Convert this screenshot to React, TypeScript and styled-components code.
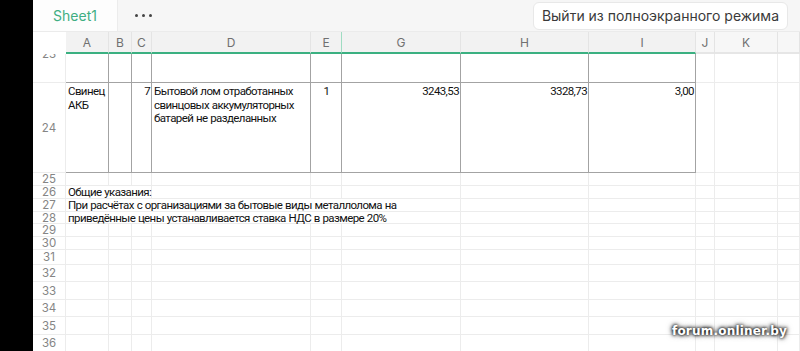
import React from 'react'
import styled, { createGlobalStyle } from 'styled-components'

const GlobalStyle = createGlobalStyle`
  html, body {
    margin: 0;
    padding: 0;
    background: #000;
  }
  body {
    font-family: Roboto, Inter, "Liberation Sans", sans-serif;
  }
`

// column widths: row head, A, B, C, D, E, G, H, I, J, K, rest
const COLS = [33, 43, 23, 20, 159, 31, 119, 128, 107, 19, 63, 22]
const LETTERS = ['A', 'B', 'C', 'D', 'E', 'G', 'H', 'I', 'J', 'K', '']
const SELECTED = 8 // A..I are underlined in green

const Screen = styled.div`
  width: 800px;
  height: 351px;
  display: flex;
  overflow: hidden;
  position: relative;
`

const SideBar = styled.div`
  width: 33px;
  flex: none;
  background: #000;
`

const Main = styled.div`
  flex: 1;
  display: flex;
  flex-direction: column;
  background: #fff;
  min-width: 0;
`

const TabBar = styled.div`
  height: 32px;
  flex: none;
  display: flex;
  align-items: center;
  background: #f6f6f6;
  border-bottom: 1px solid #ebebeb;
  box-sizing: border-box;
  font-family: Inter, Roboto, sans-serif;
`

const SheetTab = styled.div`
  width: 85px;
  height: 100%;
  display: flex;
  align-items: center;
  justify-content: center;
  background: #fdfdfd;
  border-right: 1px solid #ececec;
  box-sizing: border-box;
  color: #3fae82;
  font-size: 14px;
`

const More = styled.div`
  margin-left: 17px;
  display: flex;
  gap: 4px;
  align-items: center;

  span {
    width: 3px;
    height: 3px;
    border-radius: 50%;
    background: #444;
  }
`

const ExitButton = styled.div`
  margin-left: auto;
  margin-right: 12px;
  height: 26px;
  padding: 0 8px;
  display: flex;
  align-items: center;
  background: #fff;
  border: 1px solid #e8e8e8;
  border-radius: 6px;
  color: #3a3a3a;
  font-size: 14px;
  white-space: nowrap;
`

const Grid = styled.div`
  flex: 1;
  display: grid;
  grid-template-columns: ${COLS.map((w) => w + 'px').join(' ')};
  grid-template-rows: 22px 29px 90px 13px 13px 13px 12px 13px 13px 15px 17px 18px 17px 18px 17px;
  overflow: hidden;
  font-size: 11.5px;
  color: #111;
`

const ColHead = styled.div<{ $sel?: boolean; $marker?: boolean }>`
  display: flex;
  align-items: center;
  justify-content: center;
  background: ${(p) => (p.$sel ? '#f2f2f2' : '#f7f7f7')};
  border-right: 1px solid ${(p) => (p.$marker ? '#9fdcc2' : '#e4e4e4')};
  border-bottom: 2px solid ${(p) => (p.$sel ? '#3bb081' : '#e6e6e6')};
  color: #707070;
  font-family: Inter, Roboto, sans-serif;
  font-size: 12px;
  box-sizing: border-box;
`

const Corner = styled.div`
  background: #fff;
`

const RowHead = styled.div<{ $shift?: number }>`
  display: flex;
  align-items: center;
  justify-content: center;
  border-right: 1px solid #ececec;
  border-bottom: 1px solid #ececec;
  color: #858585;
  font-family: Inter, Roboto, sans-serif;
  font-size: 11.5px;
  line-height: 12px;
  box-sizing: border-box;
  overflow: ${(p) => (p.$shift ? 'hidden' : 'visible')};

  span {
    transform: translateY(${(p) => p.$shift ?? 0}px);
  }
`

const Cell = styled.div<{ $boxed?: boolean; $align?: string; $span?: number }>`
  grid-column: span ${(p) => p.$span ?? 1};
  border-right: 1px solid ${(p) => (p.$boxed ? '#a3a3a3' : '#ececec')};
  border-bottom: 1px solid ${(p) => (p.$boxed ? '#a3a3a3' : '#ececec')};
  box-sizing: border-box;
  text-align: ${(p) => p.$align ?? 'left'};
  padding: ${(p) => (p.$span ? '0 1px 0 2px' : '2px 1px 0 2px')};
  line-height: ${(p) => (p.$span ? '12px' : '13.5px')};
  letter-spacing: -0.6px;
  word-spacing: 0.5px;
  white-space: ${(p) => (p.$span ? 'nowrap' : 'normal')};
  min-width: 0;
`

const Watermark = styled.div`
  position: absolute;
  left: 672px;
  top: 324px;
  color: #fff;
  font-family: "DejaVu Sans", sans-serif;
  font-weight: bold;
  font-size: 12px;
  letter-spacing: 0.2px;
  text-shadow: 0 0 3px #000, 0 0 4px rgba(0, 0, 0, 0.8), 0 0 6px rgba(0, 0, 0, 0.6);
`

type Row = { n: number; cells?: { text?: string; align?: string; span?: number }[]; boxed?: boolean; shift?: number }

const rows: Row[] = [
  { n: 23, boxed: true, shift: -14 },
  {
    n: 24,
    boxed: true,
    cells: [
      { text: 'Свинец АКБ' },
      {},
      { text: '7', align: 'right' },
      { text: 'Бытовой лом отработанных свинцовых аккумуляторных батарей не разделанных' },
      { text: '1', align: 'center' },
      { text: '3243,53', align: 'right' },
      { text: '3328,73', align: 'right' },
      { text: '3,00', align: 'right' },
    ],
  },
  { n: 25 },
  { n: 26, cells: [{ text: 'Общие указания:', span: 3 }] },
  { n: 27, cells: [{ text: 'При расчётах с организациями за бытовые виды металлолома на', span: 6 }] },
  { n: 28, cells: [{ text: 'приведённые цены устанавливается ставка НДС в размере 20%', span: 6 }] },
  ...[29, 30, 31, 32, 33, 34, 35, 36].map((n) => ({ n })),
]

function renderRow(row: Row) {
  const given = row.cells ?? []
  const used = given.reduce((s, c) => s + (c.span ?? 1), 0)
  const out: React.ReactNode[] = [
    <RowHead key="h" $shift={row.shift}>
      <span>{row.n}</span>
    </RowHead>,
  ]
  given.forEach((c, i) => {
    out.push(
      <Cell key={i} $boxed={row.boxed} $align={c.align} $span={c.span}>
        {c.text}
      </Cell>
    )
  })
  for (let i = used; i < LETTERS.length; i++) {
    out.push(<Cell key={'e' + i} $boxed={row.boxed && i < SELECTED} />)
  }
  return <React.Fragment key={row.n}>{out}</React.Fragment>
}

export default function App() {
  return (
    <Screen>
      <GlobalStyle />
      <SideBar />
      <Main>
        <TabBar>
          <SheetTab>Sheet1</SheetTab>
          <More>
            <span />
            <span />
            <span />
          </More>
          <ExitButton>Выйти из полноэкранного режима</ExitButton>
        </TabBar>
        <Grid>
          <Corner />
          {LETTERS.map((l, i) => (
            <ColHead key={i} $sel={i < SELECTED} $marker={i === 4}>
              {l}
            </ColHead>
          ))}
          {rows.map(renderRow)}
        </Grid>
      </Main>
      <Watermark>forum.onliner.by</Watermark>
    </Screen>
  )
}
